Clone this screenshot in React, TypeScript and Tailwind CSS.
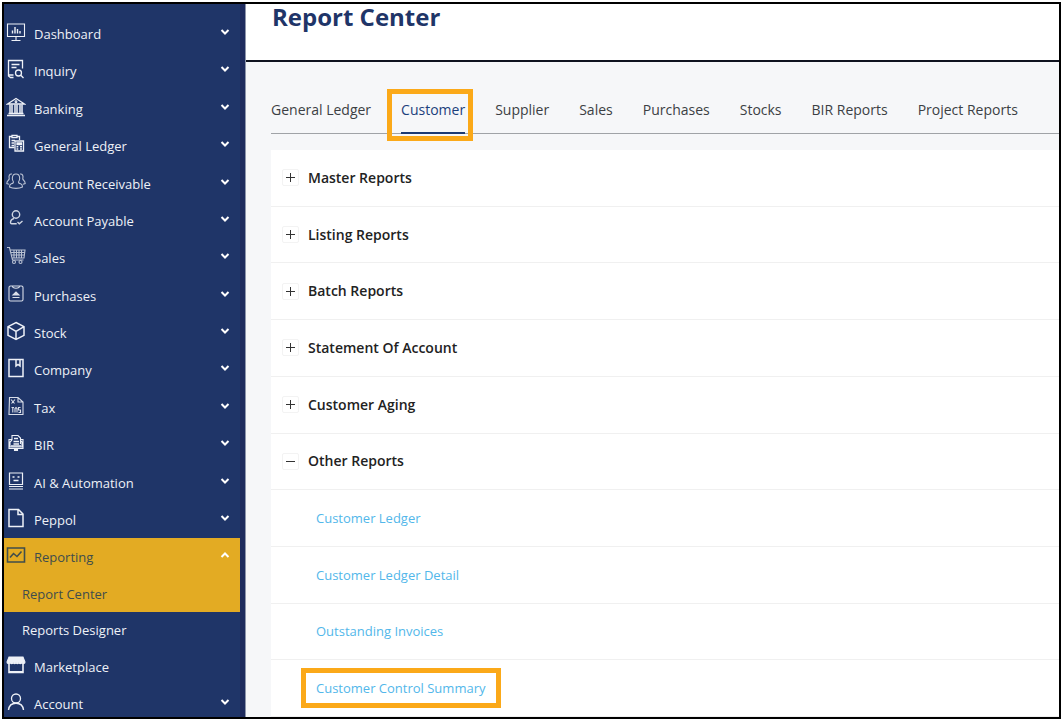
import type { ReactNode } from "react";

const icons: Record<string, ReactNode> = {
  dashboard: (
    <>
      <path d="M1.5 2h17v12.5h-17zM10 14.500v4M5.500 18.500h9" />
      <path d="M6.500 11.500V8.500M9 11.500V5M11.500 11.500V7M14 11.500V9" strokeWidth="1.400" />
    </>
  ),
  inquiry: (
    <>
      <path d="M7.500 18.500h-3l-2-1.500V1.500h14v8M5.500 5.500h8M5.500 8.500h5M2.500 16h5" strokeWidth="1.300" />
      <circle cx="12.500" cy="14" r="3" strokeWidth="1.300" />
      <path d="m14.800 16.300 2.700 2.700" strokeWidth="1.300" />
    </>
  ),
  banking: (
    <>
      <path d="M1.500 7 10 1.500 18.500 7zM1 18.500h18M2.500 16.500h15" strokeWidth="1.300" />
      <path d="M4 7.500v9M6 7.500v9M9 7.500v9M11 7.500v9M14 7.500v9M16 7.500v9" strokeWidth="1.500" />
      <circle cx="10" cy="4.800" r=".9" />
    </>
  ),
  ledger: (
    <>
      <path d="M8.500 13.500h-5v-11H6M11 2.500h2.500V6M6 1.500h5v2.200H6zM5.500 6.500H9M5.500 9h2.500M5.500 11.500h2.500" strokeWidth="1.300" />
      <path d="M9 7h8.500v10H9zM11 9h4.500v1.500H11z" strokeWidth="1.300" />
      <path d="M10.500 12.800h1.800M14 12.800h2M10.500 15h1.800M14 15h2" strokeWidth="1.400" />
    </>
  ),
  receivable: (
    <g opacity=".75">
      <path d="M7.300 9.500C6 8 6 4.500 7.300 3c1.300-1.300 4.100-1.300 5.400 0 1.300 1.500 1.300 5 0 6.500-.7 1.500.5 1.800 2 2.300 1.600.6 1.800 2 1.800 3.200-3.500 1.800-9.500 1.800-13 0 0-1.500.3-2.700 1.800-3.200 1.500-.5 2.500-.8 2-2.300Z" />
      <path d="M6 2C3.500 1.500 2.500 4 3.200 6.500c.4 2-2.400 1.500-2.400 5l2.200.8M14 2c2.500-.5 3.500 2 2.800 4.500-.4 2 2.400 1.500 2.400 5l-2.200.8" />
    </g>
  ),
  payable: (
    <g opacity=".85">
      <circle cx="10" cy="5.500" r="3.700" strokeWidth="1.400" />
      <path d="M8 9.500c-2 .6-3.500 2.200-3.500 4 0 1 .3 1.300 1.200 1.300h5M11.500 13l1.800 1.700 3.200-2.700" strokeWidth="1.400" />
    </g>
  ),
  sales: (
    <g opacity=".75">
      <path d="M1 1.500h2.500l3 12.500h11M4.500 4H19l-1 8H6.200M5 6.500h13.500M5.500 9H18M8 4v8M10.500 4v8M13 4v8M15.500 4v8" />
      <circle cx="8" cy="16" r="1.500" />
      <circle cx="14.500" cy="16" r="1.500" />
    </g>
  ),
  purchases: (
    <g opacity=".9">
      <rect x="3" y="2" width="14" height="15" rx="1.500" />
      <path d="M6.500 2c0 2 1 2.200 3.500 2.200s3.500-.2 3.500-2.200M6.500 13.500h7" />
      <path d="m7 11 3-3 3 3z" fill="currentColor" />
    </g>
  ),
  stock: (
    <path d="m10 1.500 8 4.200v8.600l-8 4.200-8-4.200V5.700zM2 5.700l8 4.600 8-4.600M10 10.300v8.200" strokeWidth="1.500" />
  ),
  company: (
    <path d="M3 1.500h14v17H3zM10 1.500v6.500l2-1.500 2 1.500V1.500" strokeWidth="1.500" />
  ),
  tax: (
    <g opacity=".9">
      <path d="M3.500 1.500H12L17 6v12.500H3zM12 1.500V6h5M5 3.500l3.500 4M9 3.500l-3.500 4" />
      <path d="M5.500 11.500H8M6.800 11.500v5M9 16.500v-4l1-1 1 1v4M14.500 11.500h-2v2.500h2v2.500h-2" />
    </g>
  ),
  bir: (
    <>
      <path d="M6 7V2.500h6l2.500 2.500v6M6 6.500H3v9h14v-9h-2.500M6 7l-2 2v5h12V9l-1.500-1.500" />
      <path d="M8 5.500h4M7.500 8.500h5.500M7.500 11h5.500M5 13h10" strokeWidth="1.400" />
      <path d="M8.500 15.500v2h3v-2" fill="currentColor" />
    </>
  ),
  automation: (
    <>
      <path d="M3.500 2h13v11.500h-13zM3 15.500h14M3 18h14" strokeWidth="1.200" />
      <path d="M6.500 6h2M11.500 6h2M7.500 9.500h5" strokeWidth="1.500" />
    </>
  ),
  peppol: (
    <path d="M3 1.500h9.500L17 6v12.500H3zM12 1.500v5h5" strokeWidth="1.500" />
  ),
  reporting: (
    <path d="M1.500 3h17v14h-17zM4 12.500l3.500-4 3.500 3 4.500-5" strokeWidth="1.600" />
  ),
  marketplace: (
    <>
      <path d="M3 2h14l2 5c0 2-2.500 2-2.800.500C15.500 9 13 9 12.800 7.500 12.500 9 10.200 9 10 7.500 9.800 9 7.500 9 7.200 7.500 7 9 4.500 9 3.800 7.500 3.500 9 1 9 1 7z" fill="currentColor" />
      <path d="M3 8v9.500h14V8M3 16.800h14" strokeWidth="1.600" />
    </>
  ),
  account: (
    <>
      <circle cx="10" cy="6.500" r="4.500" strokeWidth="1.300" />
      <path d="M2.500 18c.5-4.300 3-6.700 7.500-6.700s7 2.400 7.500 6.700" strokeWidth="1.400" />
    </>
  ),
};

const menu = [
  { label: "Dashboard", icon: "dashboard" },
  { label: "Inquiry", icon: "inquiry" },
  { label: "Banking", icon: "banking" },
  { label: "General Ledger", icon: "ledger" },
  { label: "Account Receivable", icon: "receivable" },
  { label: "Account Payable", icon: "payable" },
  { label: "Sales", icon: "sales" },
  { label: "Purchases", icon: "purchases" },
  { label: "Stock", icon: "stock" },
  { label: "Company", icon: "company" },
  { label: "Tax", icon: "tax" },
  { label: "BIR", icon: "bir" },
  { label: "AI & Automation", icon: "automation" },
  { label: "Peppol", icon: "peppol" },
];

const tabs = [
  "General Ledger",
  "Customer",
  "Supplier",
  "Sales",
  "Purchases",
  "Stocks",
  "BIR Reports",
  "Project Reports",
];

const groups = [
  "Master Reports",
  "Listing Reports",
  "Batch Reports",
  "Statement Of Account",
  "Customer Aging",
  "Other Reports",
];

const reports = [
  "Customer Ledger",
  "Customer Ledger Detail",
  "Outstanding Invoices",
  "Customer Control Summary",
];

function MenuIcon({ name }: { name: string }) {
  return (
    <svg
      viewBox="0 0 20 20"
      className="mr-2 size-5 shrink-0"
      fill="none"
      stroke="currentColor"
      strokeWidth="1.1"
      aria-hidden="true"
    >
      {icons[name]}
    </svg>
  );
}

function Chevron({ up = false }: { up?: boolean }) {
  return (
    <svg
      viewBox="0 0 10 8"
      className="mt-[6px] ml-auto h-2 w-[10px] text-white"
      fill="none"
      stroke="currentColor"
      strokeWidth="2"
      aria-hidden="true"
    >
      <path d={up ? "M1.500 6 5 2.500 8.500 6" : "M1.500 2 5 5.500 8.500 2"} />
    </svg>
  );
}

function MenuButton({ label, icon }: { label: string; icon: string }) {
  return (
    <button
      type="button"
      aria-expanded="false"
      className="flex grow items-start pt-[7px] pr-[10px] pb-2 pl-[2px] text-left"
    >
      <MenuIcon name={icon} />
      <span className="pt-[3px] leading-[18px]">{label}</span>
      <Chevron />
    </button>
  );
}

function Sidebar() {
  return (
    <aside className="flex w-[242px] shrink-0 border-r border-[#8f96ab] bg-[#1f2c5e]">
      <nav className="mr-[5px] flex grow flex-col bg-[#1f3568] pt-[11px] text-[13px] text-[#eef1f7]">
        {menu.map((item) => (
          <MenuButton key={item.label} {...item} />
        ))}

        <button
          type="button"
          aria-expanded="true"
          className="flex grow items-start bg-[#e3ab23] pt-[7px] pr-[10px] pb-2 pl-[2px] text-left text-[#3f4d4c]"
        >
          <MenuIcon name="reporting" />
          <span className="pt-[3px] leading-[18px]">Reporting</span>
          <Chevron up />
        </button>
        <a href="#report-center" className="bg-[#e3ab23] py-2 pl-[18px] leading-5 text-[#3f4d4c]">
          Report Center
        </a>
        <a href="#reports-designer" className="py-2 pl-[18px] leading-5">
          Reports Designer
        </a>

        <a href="#marketplace" className="flex grow items-start pt-[7px] pb-2 pl-[2px]">
          <MenuIcon name="marketplace" />
          <span className="pt-[3px] leading-[18px]">Marketplace</span>
        </a>
        <button
          type="button"
          aria-expanded="false"
          className="flex items-start pt-[7px] pr-[10px] pb-1 pl-[2px] text-left"
        >
          <MenuIcon name="account" />
          <span className="pt-[3px] leading-[18px]">Account</span>
          <Chevron />
        </button>
      </nav>
    </aside>
  );
}

function Tabs() {
  return (
    <div role="tablist" className="flex gap-[30px] border-b border-[#a0a3a7] text-sm text-[#3c3f44]">
      {tabs.map((tab) =>
        tab === "Customer" ? (
          <button
            key={tab}
            type="button"
            role="tab"
            aria-selected="true"
            className="relative -mb-px border-b-2 border-[#1c3a73] pt-px pb-3 leading-5 whitespace-nowrap text-[#1c3f7c]"
          >
            {tab}
            <span className="absolute -top-[10px] -right-2 -bottom-[9px] -left-[14px] border-[5px] border-[#fba919]" />
          </button>
        ) : (
          <button
            key={tab}
            type="button"
            role="tab"
            aria-selected="false"
            className="pt-px pb-[13px] leading-5 whitespace-nowrap"
          >
            {tab}
          </button>
        )
      )}
    </div>
  );
}

function ReportList() {
  return (
    <ul className="mt-4 grid grow auto-rows-fr bg-white">
      {groups.map((group) => {
        const open = group === "Other Reports";
        return (
          <li key={group} className="flex border-b border-[#f0f0f0]">
            <button
              type="button"
              aria-expanded={open}
              className="flex grow items-center gap-[9px] pl-[11px] text-left text-sm font-semibold text-[#222222]"
            >
              <span className="flex size-[17px] items-center justify-center rounded-xs border border-[#f3f3f3]">
                <svg viewBox="0 0 9 9" className="size-[9px]" stroke="#333333" aria-hidden="true">
                  <path d={open ? "M0 4.500h9" : "M0 4.500h9M4.500 0v9"} />
                </svg>
              </span>
              {group}
            </button>
          </li>
        );
      })}
      {reports.map((report) => (
        <li key={report} className="flex items-center border-b border-[#f0f0f0] py-2 pl-[45px] text-[13px]">
          {report === "Customer Control Summary" ? (
            <a href="#report" className="relative leading-5 text-[#52b7ea]">
              {report}
              <span className="absolute -inset-y-[10px] -right-4 -left-[15px] border-[5px] border-[#fba919]" />
            </a>
          ) : (
            <a href="#report" className="leading-5 text-[#52b7ea]">
              {report}
            </a>
          )}
        </li>
      ))}
    </ul>
  );
}

export default function App() {
  return (
    <div className="flex min-h-screen bg-white pt-[2px] pr-[3px] pb-[2px] pl-[2px] font-['Open_Sans','Noto_Sans',sans-serif]">
      <div className="flex min-w-0 grow border-2 border-black">
        <Sidebar />
        <main className="flex min-w-0 grow flex-col bg-[#f6f7f9]">
          <header className="border-b-2 border-[#10131f] bg-white pb-[30px] pl-[26px]">
            <h1 className="text-2xl leading-[26px] font-bold text-[#1f3568]">Report Center</h1>
          </header>
          <div className="flex grow flex-col pt-[37px] pl-[25px]">
            <Tabs />
            <ReportList />
          </div>
        </main>
      </div>
    </div>
  );
}
